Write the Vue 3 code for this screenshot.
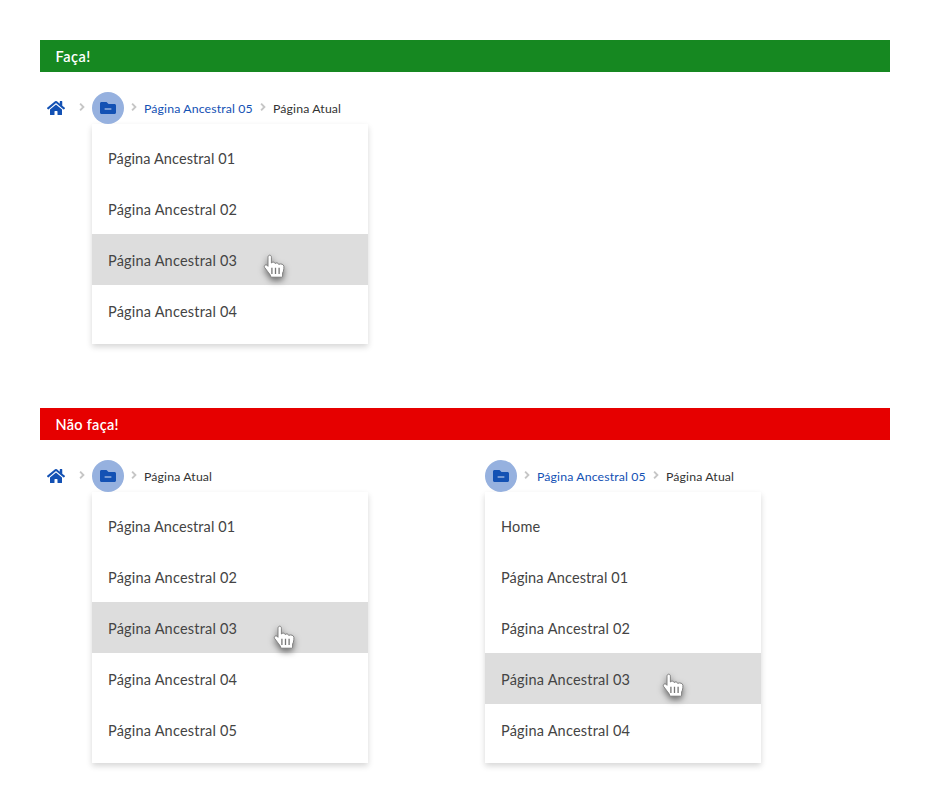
<script setup>
const pages = (from, to) =>
  Array.from({ length: to - from + 1 }, (_, i) => `Página Ancestral 0${from + i}`)

const sections = [
  {
    title: 'Faça!',
    kind: 'do',
    examples: [{ home: true, link: 'Página Ancestral 05', items: pages(1, 4), active: 2, cursor: 'cursor-a' }],
  },
  {
    title: 'Não faça!',
    kind: 'dont',
    examples: [
      { home: true, link: '', items: pages(1, 5), active: 2, cursor: 'cursor-b' },
      { home: false, link: 'Página Ancestral 05', items: ['Home', ...pages(1, 4)], active: 3, cursor: 'cursor-c' },
    ],
  },
]
</script>

<template>
  <main class="page">
    <section v-for="s in sections" :key="s.kind" class="section" :class="s.kind">
      <h2 class="banner">{{ s.title }}</h2>
      <div class="examples">
        <div v-for="(e, n) in s.examples" :key="n" class="example" :class="{ 'with-home': e.home }">
          <nav class="crumbs">
            <template v-if="e.home">
              <svg class="home" viewBox="0 0 576 512"><path d="M280.37 148.26L96 300.11V464a16 16 0 0 0 16 16l112.06-.29a16 16 0 0 0 15.92-16V368a16 16 0 0 1 16-16h64a16 16 0 0 1 16 16v95.64a16 16 0 0 0 16 16.05L464 480a16 16 0 0 0 16-16V300L295.67 148.26a12.19 12.19 0 0 0-15.3 0zM571.6 251.47L488 182.56V44.05a12 12 0 0 0-12-12h-56a12 12 0 0 0-12 12v72.61L318.47 43a48 48 0 0 0-61 0L4.34 251.47a12 12 0 0 0-1.6 16.9l25.5 31A12 12 0 0 0 45.15 301l235.22-193.74a12.19 12.19 0 0 1 15.3 0L530.9 301a12 12 0 0 0 16.9-1.6l25.5-31a12 12 0 0 0-1.7-16.93z" /></svg>
              <svg class="chevron first" viewBox="0 0 6 8"><path d="M1.1 .7 4.4 4 1.1 7.3" /></svg>
            </template>
            <span class="folder">
              <svg viewBox="0 0 512 512"><path d="M464 128H272l-64-64H48C21.49 64 0 85.49 0 112v288c0 26.51 21.49 48 48 48h416c26.51 0 48-21.49 48-48V176c0-26.51-21.49-48-48-48zm-96 168c0 8.84-7.16 16-16 16H160c-8.84 0-16-7.16-16-16v-16c0-8.84 7.16-16 16-16h192c8.84 0 16 7.16 16 16v16z" /></svg>
            </span>
            <svg class="chevron" viewBox="0 0 6 8"><path d="M1.1 .7 4.4 4 1.1 7.3" /></svg>
            <template v-if="e.link">
              <a class="link">{{ e.link }}</a>
              <svg class="chevron" viewBox="0 0 6 8"><path d="M1.1 .7 4.4 4 1.1 7.3" /></svg>
            </template>
            <span class="current">Página Atual</span>
          </nav>
          <ul class="menu">
            <li v-for="(item, i) in e.items" :key="item" class="item" :class="{ active: i === e.active, narrow: item.endsWith('1') }">
              <span>{{ item }}</span>
              <svg v-if="i === e.active" class="cursor" :class="e.cursor" viewBox="0 0 22 25">
                <path d="M5 3.2C5 .5 8.4.5 8.4 3.2V9C9.4 7.7 11.7 7.9 12.1 9.5C13.3 8.4 15.4 8.9 15.7 10.4C17.8 9.3 20.9 10.3 20.9 12.4C20.9 15.2 20.7 17 19.6 19V22.2C19.6 22.8 19.2 23.2 18.6 23.2H8.6C8 23.2 7.7 22.8 7.6 22.2C7.3 20.6 6 19.4 4.8 17.7L1.7 13.6C.4 11.7 2.7 10 4.2 11.4L5 12.3Z" />
                <path class="knuckles" d="M8.9 13.8v6.2M12.5 13.8v6.2M16.1 13.8v6.2" />
              </svg>
            </li>
          </ul>
        </div>
      </div>
    </section>
  </main>
</template>

<style>
body {
  margin: 0;
  background: #fff;
}
</style>

<style scoped>
.page {
  box-sizing: border-box;
  width: 930px;
  height: 803px;
  padding: 40px;
  overflow: hidden;
  color: #333;
  font-family: Lato, "Open Sans", sans-serif;
}
.section.do {
  height: 368px;
}
.banner {
  box-sizing: border-box;
  height: 32px;
  margin: 0;
  padding: 1px 15.5px 0;
  color: #fff;
  font-size: 14.5px;
  font-weight: 600;
  line-height: 32px;
  letter-spacing: 0.28px;
}
.do .banner {
  background: #168821;
  letter-spacing: 0.5px;
}
.dont .banner {
  background: #e60000;
}
.examples {
  display: flex;
  gap: 117px;
  padding-top: 20px;
}
.example {
  width: 276px;
}
.example.with-home {
  width: 328px;
}
.with-home .menu {
  margin-left: 52px;
}
.crumbs {
  display: flex;
  align-items: center;
  height: 32px;
  font-size: 12.3px;
  line-height: 32px;
  letter-spacing: 0.13px;
  white-space: nowrap;
}
.home {
  flex: none;
  width: 18px;
  height: 16px;
  margin-left: 7px;
  fill: #1351b4;
}
.chevron {
  flex: none;
  width: 6px;
  height: 8px;
  margin: 0 7px;
  position: relative;
  top: -1.5px;
  fill: none;
  stroke: #c6c6c6;
  stroke-width: 1.9;
}
.chevron.first {
  margin: 0 7px 0 14px;
}
.folder {
  display: flex;
  flex: none;
  align-items: center;
  justify-content: center;
  width: 32px;
  height: 32px;
  border-radius: 50%;
  background: #96b1df;
}
.folder svg {
  width: 16px;
  height: 16px;
  fill: #1351b4;
}
.link,
.current {
  padding-top: 2px;
}
.link {
  width: 109px;
  color: #1351b4;
}
.menu {
  margin: 0;
  padding: 8px 0;
  list-style: none;
  background: #fff;
  box-shadow: 0 3px 6px rgba(0, 0, 0, 0.16);
}
.item {
  position: relative;
  box-sizing: border-box;
  height: 51px;
  padding: 1px 16px 0;
  color: #444;
  font-size: 14.5px;
  line-height: 51px;
  letter-spacing: 0.2px;
}
.item.narrow {
  letter-spacing: 0.1px;
}
.item.active {
  background: #ddd;
}
.cursor {
  position: absolute;
  z-index: 1;
  width: 22px;
  height: 25px;
  overflow: visible;
  fill: #fff;
  stroke: #777;
  stroke-width: 0.9;
  filter: drop-shadow(0 3px 3px rgba(0, 0, 0, 0.5));
}
.knuckles {
  fill: none;
  stroke: #777;
  stroke-width: 1.3;
}
.cursor-a {
  left: 171px;
  top: 20px;
}
.cursor-b {
  left: 181px;
  top: 23px;
}
.cursor-c {
  left: 177px;
  top: 20px;
}
</style>
